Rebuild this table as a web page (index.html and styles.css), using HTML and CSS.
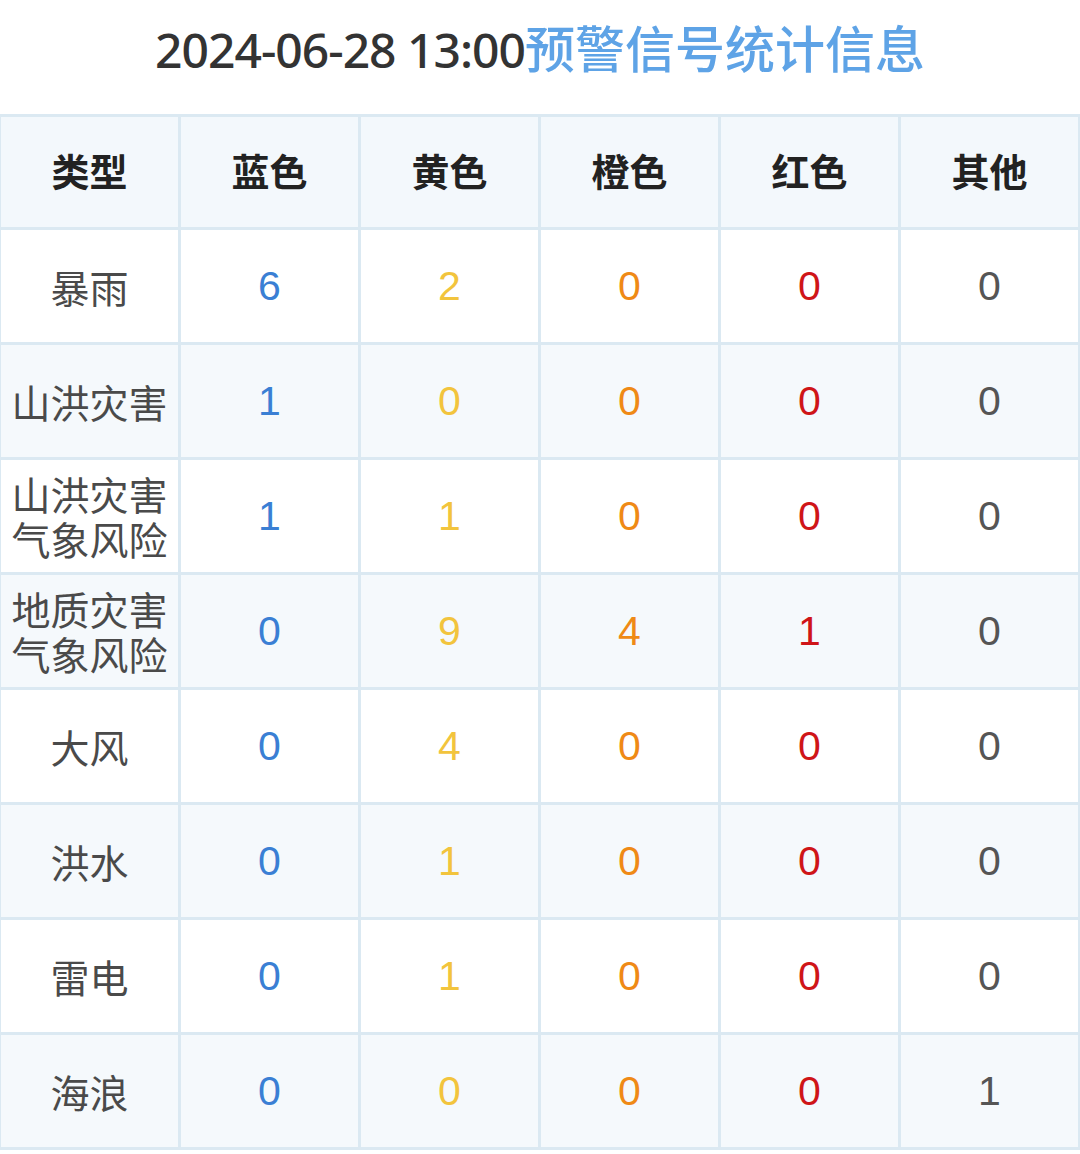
FILE: index.html
```html
<!DOCTYPE html>
<html lang="zh-CN">
<head>
<meta charset="utf-8">
<link rel="stylesheet" href="styles.css">
</head>
<body>
<h1 class="title"><span class="date">2024-06-28 13:00</span><span class="label">预警信号统计信息</span></h1>
<table class="stats">
  <colgroup>
    <col class="c-type"><col><col><col><col><col>
  </colgroup>
  <thead>
    <tr><th>类型</th><th>蓝色</th><th>黄色</th><th>橙色</th><th>红色</th><th>其他</th></tr>
  </thead>
  <tbody>
    <tr><td class="type">暴雨</td><td class="blue">6</td><td class="yellow">2</td><td class="orange">0</td><td class="red">0</td><td class="other">0</td></tr>
    <tr><td class="type">山洪灾害</td><td class="blue">1</td><td class="yellow">0</td><td class="orange">0</td><td class="red">0</td><td class="other">0</td></tr>
    <tr><td class="type"><span class="ln">山洪灾害</span><span class="ln">气象风险</span></td><td class="blue">1</td><td class="yellow">1</td><td class="orange">0</td><td class="red">0</td><td class="other">0</td></tr>
    <tr><td class="type"><span class="ln">地质灾害</span><span class="ln">气象风险</span></td><td class="blue">0</td><td class="yellow">9</td><td class="orange">4</td><td class="red">1</td><td class="other">0</td></tr>
    <tr><td class="type">大风</td><td class="blue">0</td><td class="yellow">4</td><td class="orange">0</td><td class="red">0</td><td class="other">0</td></tr>
    <tr><td class="type">洪水</td><td class="blue">0</td><td class="yellow">1</td><td class="orange">0</td><td class="red">0</td><td class="other">0</td></tr>
    <tr><td class="type">雷电</td><td class="blue">0</td><td class="yellow">1</td><td class="orange">0</td><td class="red">0</td><td class="other">0</td></tr>
    <tr><td class="type">海浪</td><td class="blue">0</td><td class="yellow">0</td><td class="orange">0</td><td class="red">0</td><td class="other">1</td></tr>
  </tbody>
</table>
</body>
</html>
```
FILE: styles.css
```css
html, body {
  margin: 0;
  padding: 0;
  background: #ffffff;
}
body {
  width: 1080px;
  font-family: "Noto Sans CJK SC", "Noto Sans", sans-serif;
}
.title {
  margin: 0;
  height: 114px;
  box-sizing: border-box;
  padding-top: 16px;
  text-align: center;
  font-size: 48px;
  line-height: 60px;
  font-weight: 500;
  white-space: nowrap;
}
.title .date {
  color: #333333;
  font-family: "Noto Sans", "Liberation Sans", sans-serif;
  letter-spacing: -1px;
}
.title .label {
  color: #5ea3e6;
  font-family: "Noto Sans CJK SC", sans-serif;
  font-size: 50px;
}
.stats {
  width: 1083px;
  margin-left: -2px;
  border-collapse: collapse;
  table-layout: fixed;
}
.stats col.c-type {
  width: 180px;
}
.stats th, .stats td {
  border: 3px solid #dbe9f2;
  height: 112px;
  padding: 0;
  text-align: center;
  vertical-align: middle;
}
.stats thead th {
  background: #f3f8fc;
  color: #222222;
  font-size: 38px;
  font-weight: 700;
  height: 113px;
  padding-bottom: 6px;
  box-sizing: border-box;
}
.stats tbody tr:nth-child(even) td {
  background: #f5f9fc;
}
.stats td.type {
  color: #4a4a4a;
  font-size: 39px;
  line-height: 45px;
  font-weight: 400;
  font-family: "Noto Sans CJK SC", sans-serif;
}
.stats td.type .ln {
  display: block;
  height: 45px;
  line-height: 45px;
}
.stats td.blue, .stats td.yellow, .stats td.orange, .stats td.red, .stats td.other {
  font-family: "Liberation Sans", "Noto Sans", sans-serif;
  font-size: 41px;
}
.blue { color: #3a7fd4; }
.yellow { color: #f2c43d; }
.orange { color: #ef8a16; }
.red { color: #cf1518; }
.other { color: #555555; }
```
